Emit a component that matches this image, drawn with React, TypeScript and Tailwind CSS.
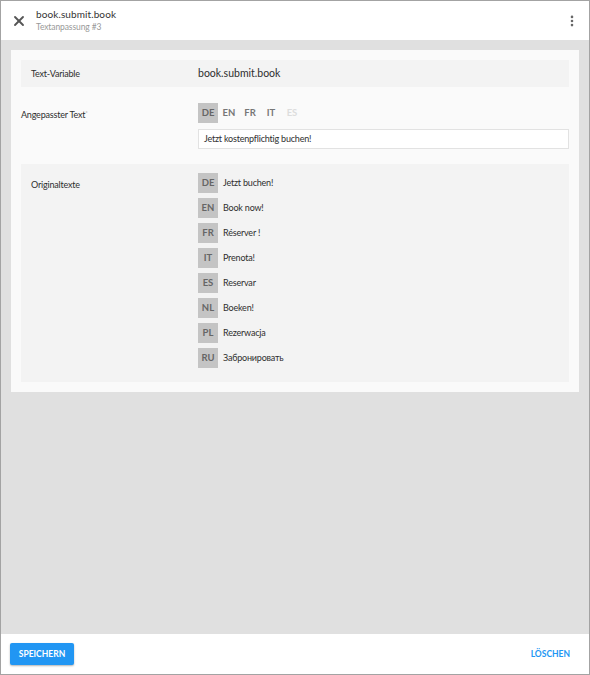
import { X, MoreVertical } from "lucide-react";

const originals = [
  { code: "DE", text: "Jetzt buchen!" },
  { code: "EN", text: "Book now!" },
  { code: "FR", text: "Réserver !" },
  { code: "IT", text: "Prenota!" },
  { code: "ES", text: "Reservar" },
  { code: "NL", text: "Boeken!" },
  { code: "PL", text: "Rezerwacja" },
  { code: "RU", text: "Забронировать" },
];

const tabs = [
  { code: "DE", active: true, muted: false },
  { code: "EN", active: false, muted: false },
  { code: "FR", active: false, muted: false },
  { code: "IT", active: false, muted: false },
  { code: "ES", active: false, muted: true },
];

export default function App() {
  return (
    <div
      className="flex h-[675px] w-[590px] flex-col border border-[#a3a3a3] bg-[#e0e0e0] text-[#2e2e2e]"
      style={{ fontFamily: "Lato, 'Open Sans', sans-serif" }}
    >
      <header className="flex h-[39px] shrink-0 items-center bg-white pl-[10px] pr-[10px]">
        <X className="h-[16px] w-[16px] text-[#555]" strokeWidth={2.8} />
        <div className="ml-[9px] flex flex-col leading-none">
          <span className="text-[10px] tracking-[0.1px] text-[#333]">book.submit.book</span>
          <span className="mt-[4px] text-[8.5px] tracking-[-0.1px] text-[#999]">Textanpassung #3</span>
        </div>
        <MoreVertical className="ml-auto h-[14px] w-[14px] text-[#666]" strokeWidth={2.5} />
      </header>

      <main className="flex-1 p-[10px]">
        <div className="flex flex-col bg-[#fafafa] p-[10px]">
          <div className="flex h-[27px] items-center bg-[#f3f3f3] px-[10px]">
            <span className="w-[167px] text-[9px] tracking-[-0.2px]">Text-Variable</span>
            <span className="text-[10.5px]">book.submit.book</span>
          </div>

          <div className="flex pt-[16px] pb-[15px]">
            <span className="mt-[5px] w-[177px] text-[9px] tracking-[-0.2px]">
              Angepasster Text<sup className="text-[6px] text-[#999]">*</sup>
            </span>
            <div className="flex flex-1 flex-col">
              <div className="flex">
                {tabs.map((t) => (
                  <span
                    key={t.code}
                    className={
                      t.active
                        ? "flex h-[20px] w-[20px] items-center justify-center bg-[#c4c4c4] text-[9.5px] font-bold text-[#666]"
                        : t.muted
                          ? "ml-[1px] flex h-[20px] w-[20px] items-center justify-center text-[9.5px] font-bold text-[#ddd]"
                          : "ml-[1px] flex h-[20px] w-[20px] items-center justify-center text-[9.5px] font-bold text-[#777]"
                    }
                  >
                    {t.code}
                  </span>
                ))}
              </div>
              <div className="mt-[6px] flex h-[20px] items-center border border-[#e2e2e2] bg-white px-[5px] text-[9px] tracking-[-0.2px]">
                Jetzt kostenpflichtig buchen!
              </div>
            </div>
          </div>

          <div className="flex bg-[#f3f3f3] px-[10px] pt-[9px] pb-[14px]">
            <span className="mt-[5px] w-[167px] text-[9px] tracking-[-0.2px]">Originaltexte</span>
            <div className="flex flex-col gap-[5px]">
              {originals.map((o) => (
                <div key={o.code} className="flex items-center">
                  <span className="flex h-[20px] w-[20px] items-center justify-center bg-[#c4c4c4] text-[9.5px] font-bold text-[#666]">
                    {o.code}
                  </span>
                  <span className="ml-[5px] text-[9px] tracking-[-0.2px]">{o.text}</span>
                </div>
              ))}
            </div>
          </div>
        </div>
      </main>

      <footer className="flex h-[40px] shrink-0 items-center justify-between bg-white px-[9px]">
        <button
          type="button"
          className="h-[22px] w-[64px] rounded-[2px] bg-[#2196f3] text-[8.5px] font-bold text-white shadow-[0_1px_2px_rgba(0,0,0,0.3)]"
        >
          SPEICHERN
        </button>
        <button type="button" className="mr-[10px] text-[8.5px] font-bold text-[#2196f3]">
          LÖSCHEN
        </button>
      </footer>
    </div>
  );
}
